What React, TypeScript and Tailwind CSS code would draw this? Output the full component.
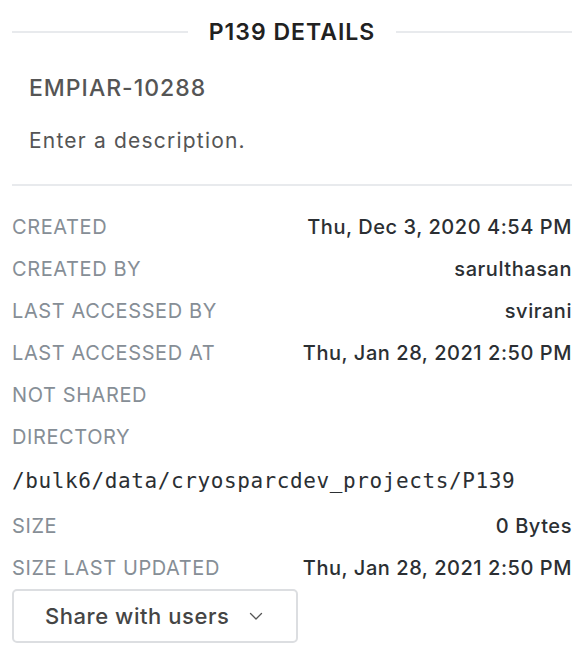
import React from "react";

type Row = { label: string; value?: string };

const rows: Row[] = [
  { label: "CREATED", value: "Thu, Dec 3, 2020 4:54 PM" },
  { label: "CREATED BY", value: "sarulthasan" },
  { label: "LAST ACCESSED BY", value: "svirani" },
  { label: "LAST ACCESSED AT", value: "Thu, Jan 28, 2021 2:50 PM" },
  { label: "NOT SHARED" },
  { label: "DIRECTORY" },
];

const bottomRows: Row[] = [
  { label: "SIZE", value: "0 Bytes" },
  { label: "SIZE LAST UPDATED", value: "Thu, Jan 28, 2021 2:50 PM" },
];

function DetailRow({ label, value }: Row) {
  return (
    <div className="flex h-[42px] items-center justify-between">
      <span className="text-[20px] tracking-[0.6px] text-[#868e96]">{label}</span>
      {value && (
        <span className="text-[20px] font-medium tracking-[0.55px] text-[#2b2f33]">
          {value}
        </span>
      )}
    </div>
  );
}

export default function App() {
  return (
    <div
      className="w-[584px] h-[660px] bg-white px-3"
      style={{ fontFamily: "Inter, 'Noto Sans', sans-serif" }}
    >
      <div className="flex h-[64px] items-center gap-[21px]">
        <div className="h-[2px] flex-1 bg-[#e8eaed]" />
        <h2 className="text-[23px] font-semibold tracking-[1px] text-[#212121]">
          P139 DETAILS
        </h2>
        <div className="h-[2px] flex-1 bg-[#e8eaed]" />
      </div>

      <div className="px-[17px]">
        <div className="flex h-[46px] items-center pt-[2px] text-[23px] font-medium tracking-[1px] text-[#555]">
          EMPIAR-10288
        </div>
        <div className="flex h-[62px] items-center text-[21px] tracking-[1.2px] text-[#555]">
          Enter a description.
        </div>
      </div>

      <div className="mt-[12px] h-[2px] bg-[#e8eaed]" />

      <div className="pt-[20px]">
        {rows.map((r) => (
          <DetailRow key={r.label} {...r} />
        ))}
        <div
          className="flex h-[47px] items-center text-[21px] tracking-[0.6px] text-[#2b2f33]"
          style={{ fontFamily: "'DejaVu Sans Mono', monospace" }}
        >
          /bulk6/data/cryosparcdev_projects/P139
        </div>
        {bottomRows.map((r) => (
          <DetailRow key={r.label} {...r} />
        ))}
      </div>

      <button className="flex h-[54px] w-[286px] items-center gap-[19px] rounded-[5px] border-2 border-[#dcdee1] pl-[31px] text-[22px] font-medium tracking-[0.55px] text-[#454545]">
        Share with users
        <svg width="16" height="16" viewBox="0 0 16 16" fill="none">
          <path
            d="M2.5 5.5l5.5 5.5 5.5-5.5"
            stroke="#555"
            strokeWidth="1.3"
            strokeLinecap="round"
            strokeLinejoin="round"
          />
        </svg>
      </button>
    </div>
  );
}
